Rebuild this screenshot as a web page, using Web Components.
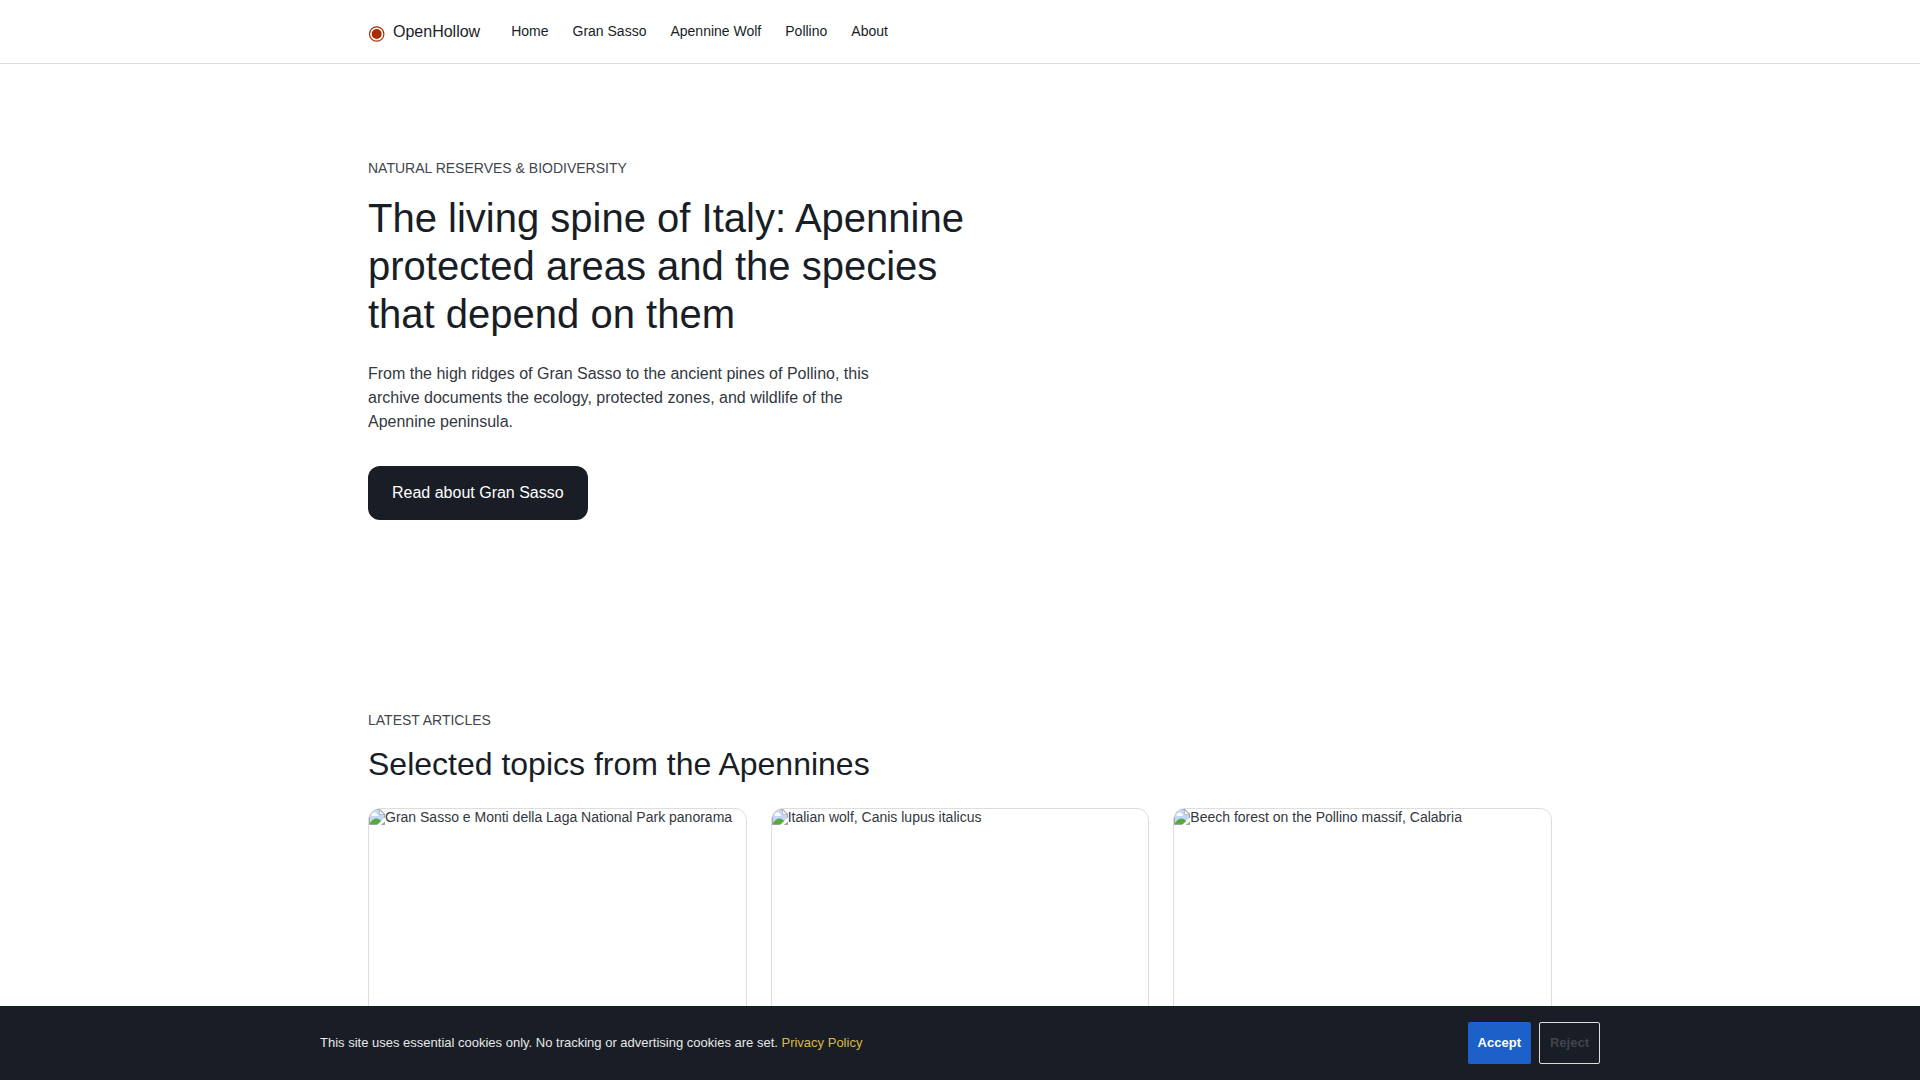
<!DOCTYPE html>
<html lang="en">
<head>
<meta charset="utf-8">
<meta name="viewport" content="width=device-width, initial-scale=1">
<title>OpenHollow</title>
<style>
  :root {
    --ink: #181d26;
    --body: #333840;
    --muted: #41454d;
    --line: #dddddd;
    --accent: #aa2d00;
    --link: #1b61c9;
    --gold: #d9b84a;
  }
  body {
    margin: 0;
    padding-bottom: 96px;
    background: #fff;
    color: var(--body);
    font: 14px/20px "Liberation Sans", Arial, sans-serif;
  }
</style>
</head>
<body>
<site-header>
  <nav-link href="#home">Home</nav-link>
  <nav-link href="#gran-sasso">Gran Sasso</nav-link>
  <nav-link href="#wolf">Apennine Wolf</nav-link>
  <nav-link href="#pollino">Pollino</nav-link>
  <nav-link href="#about">About</nav-link>
</site-header>
<main>
  <hero-section href="#gran-sasso">
    <span slot="eyebrow">NATURAL RESERVES &amp; BIODIVERSITY</span>
    <span slot="title">The living spine of Italy: Apennine protected areas and the species that depend on them</span>
    <span slot="lead">From the high ridges of Gran Sasso to the ancient pines of Pollino, this archive documents the ecology, protected zones, and wildlife of the Apennine peninsula.</span>
    <span slot="action">Read about Gran Sasso</span>
  </hero-section>
  <article-grid>
    <span slot="eyebrow">LATEST ARTICLES</span>
    <span slot="title">Selected topics from the Apennines</span>
    <article-card>Gran Sasso e Monti della Laga National Park panorama</article-card>
    <article-card>Italian wolf, Canis lupus italicus</article-card>
    <article-card>Beech forest on the Pollino massif, Calabria</article-card>
  </article-grid>
</main>
<cookie-bar>This site uses essential cookies only. No tracking or advertising cookies are set.</cookie-bar>

<script>
  const define = (name, html, setup) => customElements.define(name, class extends HTMLElement {
    constructor() {
      super();
      this.attachShadow({ mode: "open" }).innerHTML = html;
    }
    connectedCallback() {
      if (setup) setup(this, this.shadowRoot);
    }
  });

  const copyHref = (host, root) => {
    root.querySelector("a").href = host.getAttribute("href") || "#";
  };

  define("nav-link", `
    <style>
      :host { display: block; }
      a { color: var(--ink); text-decoration: none; }
    </style>
    <a><slot></slot></a>`, copyHref);

  define("site-header", `
    <style>
      :host { display: block; background: #fff; border-bottom: 1px solid var(--line); }
      .inner { box-sizing: border-box; max-width: 1280px; height: 63px; margin: 0 auto; padding: 0 48px; display: flex; align-items: center; gap: 31px; }
      .brand { display: flex; align-items: center; gap: 8px; color: var(--ink); font-size: 16px; line-height: 24px; text-decoration: none; }
      svg { display: block; width: 17px; height: 20px; }
      nav { display: flex; gap: 24px; padding-bottom: 2px; }
    </style>
    <header class="inner">
      <a class="brand" href="#home">
        <svg viewBox="0 0 17 20" aria-hidden="true"><circle cx="8.7" cy="12" r="7.2" fill="none" stroke="#aa2d00" stroke-width="1.2"/><circle cx="8.7" cy="12" r="5" fill="#aa2d00"/></svg>
        <span>OpenHollow</span>
      </a>
      <nav aria-label="Main"><slot></slot></nav>
    </header>`);

  define("hero-section", `
    <style>
      :host { display: block; }
      section { box-sizing: border-box; max-width: 1280px; margin: 0 auto; padding: 94px 48px 96px; }
      .eyebrow { margin: 0 0 16px; color: var(--muted); }
      h1 { max-width: 640px; margin: 0 0 24px; color: var(--ink); font-size: 40px; font-weight: 400; line-height: 48px; }
      .lead { max-width: 520px; margin: 0 0 32px; font-size: 16px; line-height: 24px; }
      a { display: inline-block; padding: 15px 24px; border-radius: 12px; background: var(--ink); color: #fff; font-size: 16px; line-height: 24px; text-decoration: none; vertical-align: top; }
    </style>
    <section>
      <p class="eyebrow"><slot name="eyebrow"></slot></p>
      <h1><slot name="title"></slot></h1>
      <p class="lead"><slot name="lead"></slot></p>
      <a><slot name="action"></slot></a>
    </section>`, copyHref);

  define("article-grid", `
    <style>
      :host { display: block; }
      section { box-sizing: border-box; max-width: 1280px; margin: 0 auto; padding: 94px 48px; }
      .eyebrow { margin: 0 0 12px; color: var(--muted); }
      h2 { margin: 0 0 22px; color: var(--ink); font-size: 32px; font-weight: 400; line-height: 44px; }
      .grid { display: grid; grid-template-columns: repeat(3, minmax(0, 1fr)); gap: 24px; }
    </style>
    <section>
      <p class="eyebrow"><slot name="eyebrow"></slot></p>
      <h2><slot name="title"></slot></h2>
      <div class="grid"><slot></slot></div>
    </section>`);

  define("article-card", `
    <style>
      :host { display: block; overflow: hidden; border: 1px solid var(--line); border-radius: 12px; background: #fff; }
      .media { display: flex; align-items: flex-start; aspect-ratio: 16 / 10; line-height: 16px; }
      svg { display: block; flex: none; width: 16px; height: 16px; }
    </style>
    <div class="media">
      <svg viewBox="0 0 16 16" aria-hidden="true">
        <path d="M0 0h11l5 5v11H0z" fill="#a3a3a3"/>
        <path d="M1 1h9.500v4.500H15V15H1z" fill="#c4d7f8"/>
        <path d="M11 1.500V5h3.500z" fill="#fff"/>
        <path d="M3 7a2 2 0 0 1 1-3 2.500 2.500 0 0 1 4 1 1.500 1.500 0 0 1 1 2z" fill="#fff"/>
        <path d="M1 15v-1c2-3 4-4.500 6.500-4.500 2 0 3.500 1 4.500 2.500v3z" fill="#55ab3b"/>
        <path d="M16 8.500v4L12 16H8z" fill="#fff"/>
        <path d="M16 12.500V16h-4z" fill="#a3a3a3"/>
      </svg>
      <span><slot></slot></span>
    </div>`);

  define("cookie-bar", `
    <style>
      :host { display: block; position: fixed; left: 0; right: 0; bottom: 0; z-index: 10; background: var(--ink); color: #e8e8e8; font-size: 13px; }
      .inner { box-sizing: border-box; max-width: 1280px; margin: 0 auto; padding: 16px 0; display: flex; align-items: center; justify-content: space-between; gap: 24px; }
      p { margin: 0; }
      a { color: var(--gold); text-decoration: none; }
      .actions { display: flex; gap: 8px; }
      button { box-sizing: border-box; height: 42px; margin: 0; padding: 0 10px; border: 0; border-radius: 2px; background: var(--link); color: #fff; font: 700 13px/20px "Liberation Sans", Arial, sans-serif; }
      .reject { border: 1px solid var(--line); background: transparent; color: var(--muted); }
    </style>
    <div class="inner">
      <p><slot></slot> <a href="#privacy">Privacy Policy</a></p>
      <div class="actions">
        <button type="button">Accept</button>
        <button type="button" class="reject">Reject</button>
      </div>
    </div>`);
</script>
</body>
</html>
